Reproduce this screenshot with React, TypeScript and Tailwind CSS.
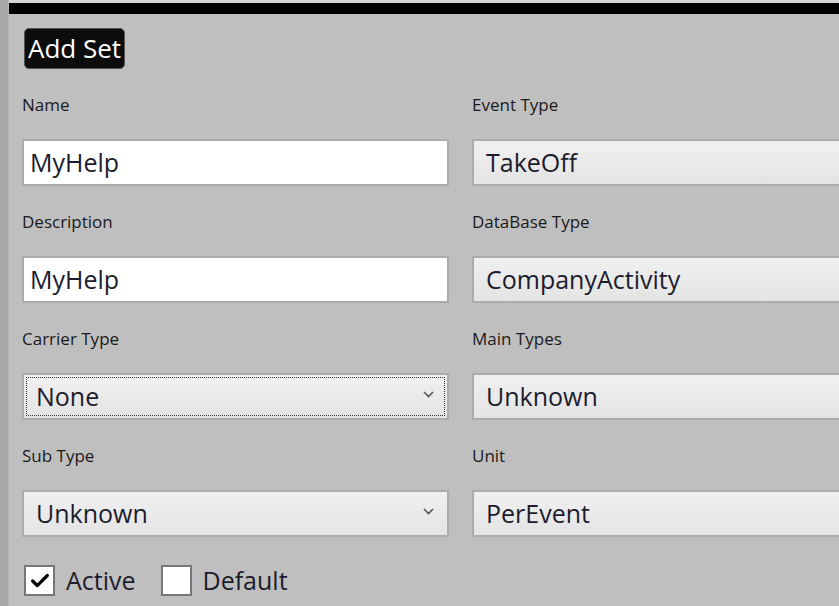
import { Check } from "lucide-react"

const font = { fontFamily: '"Open Sans", "Noto Sans", sans-serif' }

function Label({ text }: { text: string }) {
  return <div className="flex h-[24px] items-center text-[17px] font-medium leading-none text-[#1a1a1a]">{text}</div>
}

function TextBox({ value }: { value: string }) {
  return (
    <div className="flex h-[47px] items-center border-2 border-[#ababab] bg-white pl-[6px] pt-[1px] text-[25px] text-[#1c1c2c]">
      {value}
    </div>
  )
}

function Combo({ value, focused, chevron }: { value: string; focused?: boolean; chevron?: boolean }) {
  return (
    <div className="flex h-[47px] border-2 border-[#acacac] bg-gradient-to-b from-[#f0f0f0] to-[#e4e4e4] p-[2px]">
      <div
        className={`flex flex-1 items-center justify-between pl-[9px] pr-[10px] text-[25px] text-[#1c1c2c] ${
          focused ? "border border-dotted border-[#333]" : "border border-transparent"
        }`}
      >
        <span>{value}</span>
        {chevron && (
          <svg width="11" height="7" viewBox="0 0 11 7" className="mt-[-4px]">
            <path d="M1 1 L5.5 5.5 L10 1" fill="none" stroke="#555" strokeWidth="1.6" />
          </svg>
        )}
      </div>
    </div>
  )
}

function Field({ label, children }: { label: string; children: React.ReactNode }) {
  return (
    <div className="flex flex-col gap-[23px]">
      <Label text={label} />
      {children}
    </div>
  )
}

function CheckBox({ label, checked }: { label: string; checked?: boolean }) {
  return (
    <div className="flex items-center gap-[11px]">
      <div className="flex h-[31px] w-[31px] items-center justify-center border-2 border-[#777] bg-white">
        {checked && <Check className="h-[22px] w-[22px] text-black" strokeWidth={3.5} />}
      </div>
      <span className="text-[25px] text-[#1c1c2c]">{label}</span>
    </div>
  )
}

export default function App() {
  return (
    <div className="flex h-[606px] w-[839px] overflow-hidden bg-[#bfbfbf]" style={font}>
      <div className="w-[9px] shrink-0 border-r border-[#b4b4b4] bg-[#a9a9a9]" />
      <div className="flex min-w-0 flex-1 flex-col">
        <div className="h-[3px] bg-[#d6d6d6]" />
        <div className="h-[11px] bg-black" />
        <div className="pl-[13px] pt-[14px]">
          <button className="ml-[2px] flex h-[41px] items-center rounded-[5px] border border-[#555] bg-[#0c0c0c] px-[3px] text-[26px] text-white">
            Add Set
          </button>
          <div className="mt-[23px] grid w-[880px] grid-cols-[427px_427px] gap-x-[23px] gap-y-[23px]">
            <Field label="Name">
              <TextBox value="MyHelp" />
            </Field>
            <Field label="Event Type">
              <Combo value="TakeOff" />
            </Field>
            <Field label="Description">
              <TextBox value="MyHelp" />
            </Field>
            <Field label="DataBase Type">
              <Combo value="CompanyActivity" />
            </Field>
            <Field label="Carrier Type">
              <Combo value="None" focused chevron />
            </Field>
            <Field label="Main Types">
              <Combo value="Unknown" />
            </Field>
            <Field label="Sub Type">
              <Combo value="Unknown" chevron />
            </Field>
            <Field label="Unit">
              <Combo value="PerEvent" />
            </Field>
          </div>
          <div className="mt-[25px] flex items-center gap-[25px] pl-[2px]">
            <CheckBox label="Active" checked />
            <CheckBox label="Default" />
          </div>
        </div>
      </div>
    </div>
  )
}
